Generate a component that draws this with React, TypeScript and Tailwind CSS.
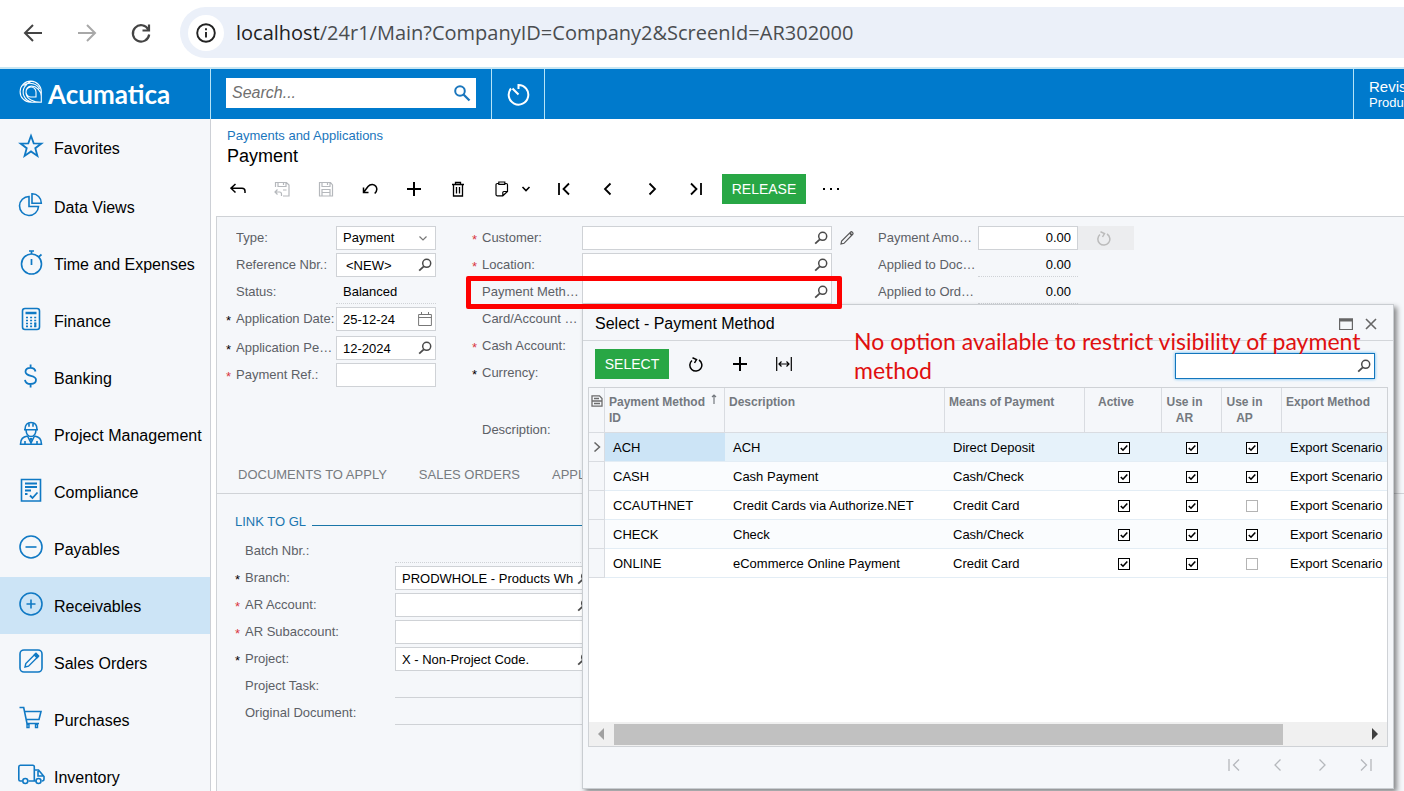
import type { ReactNode } from "react";
import clsx from "clsx";

type IconProps = { className?: string; children?: ReactNode; size?: number };

function Icon({ className, children, size = 24 }: IconProps) {
  return (
    <svg
      viewBox={`0 0 ${size} ${size}`}
      width={size}
      height={size}
      fill="none"
      stroke="currentColor"
      strokeWidth="1.6"
      aria-hidden="true"
      className={clsx("shrink-0", className)}
    >
      {children}
    </svg>
  );
}

const Lookup = () => (
  <Icon size={14} className="text-[#4a4a4a]">
    <circle cx="8.7" cy="5.3" r="4" strokeWidth="1.5" />
    <path d="M5.8 8.4 1.2 12.6" strokeWidth="1.8" />
  </Icon>
);

const Reload = ({ className }: { className?: string }) => (
  <Icon size={16} className={className}>
    <path d="M4 4.500A6 6 0 1 0 11 4M4.500 1.800l4 1.700-2 3.500" strokeWidth="1.500" />
  </Icon>
);

const Plus = () => (
  <Icon size={16}>
    <path d="M8 1v14M1 8h14" strokeWidth="2" />
  </Icon>
);

const modules = [
  {
    name: "Favorites",
    icon: <path d="m12 1.800 2.700 7.500 7.700.2-6.100 4.700 2.100 7.700L12 17.400l-6.400 4.500 2.100-7.700-6.100-4.700 7.700-.2z" strokeWidth="1.800" />,
  },
  {
    name: "Data Views",
    icon: (
      <>
        <path d="M10 3.500A9.500 9.500 0 1 0 19.500 13.500H10z" />
        <path d="M13 .8a9.200 9.200 0 0 1 9.300 9.400H13z" />
      </>
    ),
  },
  {
    name: "Time and Expenses",
    icon: (
      <>
        <circle cx="12.500" cy="14" r="10" />
        <path d="M12.500 9v6M10 1h5M12.500 1v3M19.500 7l3-2.500" strokeWidth="1.700" />
      </>
    ),
  },
  {
    name: "Finance",
    icon: (
      <>
        <rect x="3.500" y="1.500" width="17" height="21" rx="2.500" />
        <path d="M6.500 6h11" strokeWidth="2.500" />
        <path d="M7 10.500h10.500M7 13.500h10.500M7 16.500h10.500M7 19.300h10.500" strokeWidth="1.700" strokeDasharray="2 2.100" />
        <path d="M16.300 15.500v4.500" strokeWidth="2" />
      </>
    ),
  },
  {
    name: "Banking",
    icon: (
      <path
        d="M16.500 7.500C16 4.800 14 3.800 11.500 3.800 8.500 3.800 6.500 5.500 6.500 7.800c0 5.500 10.500 2.800 10.500 8 0 2.800-2.300 4.200-5.300 4.200-3.200 0-5.300-1.300-5.700-4.200M11.600.5v3.300M11.600 20v3.500"
        strokeWidth="1.800"
      />
    ),
  },
  {
    name: "Project Management",
    icon: (
      <>
        <path d="M6 8.500C6 4 8.500 1.500 12 1.500S18 4 18 8.500M5 8.700h14M10 1.800v4M14 1.800v4M7 9c.3 4 2 6.500 5 6.500s4.700-2.500 5-6.500" />
        <path d="M8.500 15C4 16 1.500 17.500 1.500 23.200h21c0-5.700-2.500-7.200-7-8.200M8.500 15l3.500 7 3.500-7M6 20v3M18 20v3" />
        <path d="m10.500 17 1.500 5 1.500-5z" fill="currentColor" stroke="none" />
      </>
    ),
  },
  {
    name: "Compliance",
    icon: (
      <>
        <path d="M2.500 1.500h19v21.500h-19z" />
        <path d="M6 5.500h12M6 9h12M6 12.500h6M6 16h2.500M11 17.500l2.500 2.500 5-5.500" strokeWidth="1.800" />
      </>
    ),
  },
  {
    name: "Payables",
    icon: (
      <>
        <circle cx="12" cy="12" r="11" />
        <path d="M6.500 12h11" />
      </>
    ),
  },
  {
    name: "Receivables",
    icon: (
      <>
        <circle cx="12" cy="12" r="11" />
        <path d="M7.500 12h9M12 7.500v9" />
      </>
    ),
    active: true,
  },
  {
    name: "Sales Orders",
    icon: (
      <>
        <rect x="1" y="1" width="22" height="22" rx="4" />
        <path d="m6 18 .8-3.500L16.500 4.800l2.700 2.700L9.500 17.200z" strokeWidth="1.400" />
        <path d="m15.500 6 1.500-1.500 2.500 2.500L18 8.500z" fill="currentColor" />
      </>
    ),
  },
  {
    name: "Purchases",
    icon: (
      <>
        <path d="M.5 1.500h4.200L8 17.500h12M5.500 5.500h16.500L20 13.500H7.200" />
        <path d="M8 18.500h2v3H8zM16.500 18.500h2v3h-2z" strokeWidth="1.400" />
      </>
    ),
  },
  {
    name: "Inventory",
    icon: (
      <>
        <path d="M3 18H1.300a1.500 1.500 0 0 1-1.500-1.500V4A1.700 1.700 0 0 1 1.300 2.300h12.500A1.500 1.500 0 0 1 15.300 4v14H9.500M15.300 7h4.200l5.500 6.500V16a2 2 0 0 1-2 2M15.300 18h1.500M19 8v5h5.500" />
        <circle cx="6.300" cy="18" r="2.500" />
        <circle cx="19.500" cy="18" r="2.500" />
      </>
    ),
  },
];

const methods = [
  { id: "ACH", description: "ACH", means: "Direct Deposit", ap: true },
  { id: "CASH", description: "Cash Payment", means: "Cash/Check", ap: true },
  { id: "CCAUTHNET", description: "Credit Cards via Authorize.NET", means: "Credit Card", ap: false },
  { id: "CHECK", description: "Check", means: "Cash/Check", ap: true },
  { id: "ONLINE", description: "eCommerce Online Payment", means: "Credit Card", ap: false },
];

type FieldProps = {
  id: string;
  label: string;
  required?: "red" | "black";
  labelWidth?: string;
  className?: string;
  children?: ReactNode;
};

function Field({ id, label, required, labelWidth = "w-[100px]", className, children }: FieldProps) {
  return (
    <div className={clsx("flex h-6 items-center", className)}>
      <span
        className={clsx("w-[10px] shrink-0 pt-[3px] text-[13px] leading-5", required === "red" ? "text-[#d9363e]" : "text-black")}
        aria-hidden="true"
      >
        {required ? "*" : ""}
      </span>
      <label htmlFor={id} className={clsx("shrink-0 truncate leading-6 text-[#5c6066]", labelWidth)}>
        {label}
      </label>
      {children}
    </div>
  );
}

type TextBoxProps = { id: string; value?: string; width: string; lookup?: boolean; indent?: string; icon?: ReactNode };

function TextBox({ id, value = "", width, lookup, indent = "pl-[6px]", icon }: TextBoxProps) {
  return (
    <div className={clsx("flex h-6 shrink-0 items-center border border-[#cfd2d6] bg-white pr-[3px]", width)}>
      <input id={id} defaultValue={value} className={clsx("h-full w-0 min-w-0 flex-1 bg-transparent text-black outline-none", indent)} />
      {lookup && (
        <button type="button" aria-label="Look up">
          <Lookup />
        </button>
      )}
      {icon}
    </div>
  );
}

function ToolButton({ label, muted, children }: { label: string; muted?: boolean; children: ReactNode }) {
  return (
    <button
      type="button"
      aria-label={label}
      className={clsx("flex h-8 w-11 shrink-0 items-center justify-center", muted ? "text-[#b5b8bc]" : "text-black")}
    >
      {children}
    </button>
  );
}

const pagerPaths = [
  { label: "First", d: "M3 2v12M13 2.500 7.500 8l5.500 5.500" },
  { label: "Previous", d: "M10.500 2.500 5 8l5.500 5.500" },
  { label: "Next", d: "M5.500 2.500 11 8l-5.500 5.500" },
  { label: "Last", d: "M13 2v12M3 2.500 8.500 8 3 13.500" },
];

function Pager({ muted }: { muted?: boolean }) {
  return (
    <>
      {pagerPaths.map((p) => (
        <ToolButton key={p.label} label={p.label} muted={muted}>
          <Icon size={16}>
            <path d={p.d} strokeWidth={muted ? 1.3 : 1.8} />
          </Icon>
        </ToolButton>
      ))}
    </>
  );
}

function Check({ checked, label }: { checked: boolean; label: string }) {
  return (
    <span className="mx-auto grid size-3">
      <input
        type="checkbox"
        defaultChecked={checked}
        aria-label={label}
        className="peer col-start-1 row-start-1 size-3 appearance-none border border-[#b4b4b4] bg-white checked:border-black"
      />
      <svg
        viewBox="0 0 12 12"
        fill="none"
        stroke="black"
        strokeWidth="1.6"
        className="pointer-events-none invisible col-start-1 row-start-1 size-3 peer-checked:visible"
      >
        <path d="M2.800 6 5 8.200 9.300 3.500" />
      </svg>
    </span>
  );
}

function BrowserBar() {
  return (
    <div className="flex h-[69px] shrink-0 items-center border-b-2 border-[#c8e6f3] bg-white pb-[2px] text-[#444]">
      <button type="button" aria-label="Back" className="ml-[21px]">
        <Icon>
          <path d="M21 12H4M12 4 4 12l8 8" strokeWidth="2" />
        </Icon>
      </button>
      <button type="button" aria-label="Forward" className="ml-[30px] text-[#a8a8a8]">
        <Icon>
          <path d="M3 12h17M12 4l8 8-8 8" strokeWidth="2" />
        </Icon>
      </button>
      <button type="button" aria-label="Reload" className="ml-[30px]">
        <Icon>
          <path d="M19.300 8.500A8.200 8.200 0 1 0 20.200 13.500M20 3.500V9.500h-6.500" strokeWidth="2.200" />
        </Icon>
      </button>
      <div className="ml-[27px] flex h-[51px] flex-1 items-center rounded-l-full bg-[#ebf0f9] pl-2">
        <span className="flex size-9 items-center justify-center rounded-full bg-white text-[#222]">
          <Icon size={20}>
            <circle cx="10" cy="10" r="8.800" strokeWidth="1.900" />
            <path d="M10 9v5.500M10 5.300v2" strokeWidth="1.900" />
          </Icon>
        </span>
        <div className="ml-3 font-['Open_Sans',sans-serif] text-xl leading-7 whitespace-nowrap text-[#4a4d50]">
          <span className="text-[#1f1f1f]">localhost</span>/24r1/Main?CompanyID=Company2&amp;ScreenId=AR302000
        </div>
      </div>
    </div>
  );
}

function AppHeader() {
  return (
    <header className="flex h-[50px] shrink-0 bg-[#007acc] text-white">
      <a href="#" className="flex w-[211px] shrink-0 items-center border-r border-[#b5e4f7] pl-[19px]">
        <Icon className="mb-1">
          <path
            d="M22.300 22.300H11.800A10.600 10.600 0 1 1 22.300 12z M22.300 22.300C14 22.300 8 19 7 13.500 6.300 9 9 6 12.500 6c5 0 9.500 5 9.800 10M12 1.500C7 3.500 2 9.500 5 16c1.500 3.500 5 5.500 8 6.300M17 17h-4.500a5 5 0 1 1 4.500-5zM4.500 5.500C10 1 19 4 20.500 9"
            strokeWidth="1.100"
          />
        </Icon>
        <span className="ml-[5px] font-[Lato,sans-serif] text-[26px] leading-7 font-bold">Acumatica</span>
      </a>
      <div className="flex w-[281px] shrink-0 items-start border-r border-[#b5e4f7] pt-[9px] pl-[15px]">
        <div className="flex h-[30px] w-[250px] items-center bg-white pr-[5px]">
          <input
            aria-label="Search"
            placeholder="Search..."
            className="w-0 flex-1 pl-[6px] text-base text-black italic outline-none placeholder:text-[#6f6f6f]"
          />
          <button type="button" aria-label="Search" className="text-[#1a76bd]">
            <Icon size={18}>
              <circle cx="7" cy="7" r="4.800" strokeWidth="2" />
              <path d="m10.500 10.500 6 6" strokeWidth="2.300" />
            </Icon>
          </button>
        </div>
      </div>
      <button type="button" aria-label="Business date" className="flex w-[53px] shrink-0 items-center justify-center border-r border-[#b5e4f7]">
        <Icon>
          <path d="M5 6.500A9.800 9.800 0 1 0 12.500 3V7M6.500 6.500 12.500 12.500" strokeWidth="2" />
        </Icon>
      </button>
      <div className="ml-auto w-[51px] shrink-0 overflow-hidden border-l border-[#b5e4f7] pt-[10px] pl-[15px] whitespace-nowrap">
        <div className="text-[15px] leading-4">Revision</div>
        <div className="text-[13px] leading-4">Products</div>
      </div>
    </header>
  );
}

function Sidebar() {
  return (
    <nav className="w-[211px] shrink-0 overflow-hidden border-r border-[#cdd0d6] bg-[#f5f7fa]">
      {modules.map((m) => (
        <a
          key={m.name}
          href="#"
          className={clsx(
            "flex h-[57px] items-center gap-[11px] pt-[2px] pl-[19px] text-base whitespace-nowrap text-black first:h-[59px] first:pb-[2px]",
            m.active && "bg-[#cce4f6]",
          )}
        >
          <Icon className="mb-[5px] overflow-visible text-[#1079c4]">{m.icon}</Icon>
          {m.name}
        </a>
      ))}
    </nav>
  );
}

function Toolbar() {
  return (
    <div className="mt-[6px] ml-[5px] flex items-center">
      <ToolButton label="Back">
        <Icon size={16}>
          <path d="M5.500 3 1 7.200l4.500 4.300M1 7.200h11a3 3 0 0 1 3 3V12" strokeWidth="1.500" />
        </Icon>
      </ToolButton>
      <ToolButton label="Save and close" muted>
        <Icon size={16}>
          <path d="M1.500 6V1.500h11L15 4v11H9M4 1.500v4h8v-4M9.500 2v2M9 9h3.500M3.500 8.500 1 11l2.500 2.500M1 11h4.500a2 2 0 0 1 2 2v2" strokeWidth="1.200" />
        </Icon>
      </ToolButton>
      <ToolButton label="Save" muted>
        <Icon size={16}>
          <path d="M1.500 1.500h11L14.500 4v11h-13zM4 1.500v4h8v-4M9.500 2v2M4 15V8.500h8V15M4 11.500h8" strokeWidth="1.200" />
        </Icon>
      </ToolButton>
      <ToolButton label="Undo">
        <Icon size={16}>
          <path d="M1.500 6.500v5h5M1.700 11.300 6 5.500c2.500-3 6.500-2.500 8 0 1.300 2.300.8 5-1.300 7" strokeWidth="1.500" />
        </Icon>
      </ToolButton>
      <ToolButton label="Add">
        <Plus />
      </ToolButton>
      <ToolButton label="Delete">
        <Icon size={16}>
          <path d="M2 3.500h12M5.500 3.500v-2h5v2M3.500 3.500v11.500h9V3.500M6.500 6v6.500M9.500 6v6.500" strokeWidth="1.300" />
        </Icon>
      </ToolButton>
      <button type="button" aria-label="Copy and paste" className="flex h-8 w-[62px] shrink-0 items-center gap-[11px] pl-[14px]">
        <Icon size={16}>
          <path d="M4.500 2.500H3.300A1.300 1.300 0 0 0 2 3.800V13.500a1.300 1.300 0 0 0 1.300 1.300h5.500L13.500 10.500V3.800A1.300 1.300 0 0 0 12.200 2.500H11M8.800 14.800V11.500a1 1 0 0 1 1-1h3.700M4.800 1h6v2.300h-6z" strokeWidth="1.200" />
        </Icon>
        <Icon size={10}>
          <path d="m1.500 3 3.500 3.500L8.500 3" />
        </Icon>
      </button>
      <Pager />
      <button type="button" className="ml-1 h-[30px] w-[84px] shrink-0 bg-[#28a745] text-sm text-white">
        RELEASE
      </button>
      <button type="button" aria-label="More" className="ml-[3px] flex h-8 w-11 shrink-0 items-center justify-center gap-[5px]">
        <span className="size-[2px] bg-black" />
        <span className="size-[2px] bg-black" />
        <span className="size-[2px] bg-black" />
      </button>
    </div>
  );
}

function Summary() {
  return (
    <div className="flex h-[240px] pt-[9px] pl-[9px]">
      <div className="flex w-[246px] shrink-0 flex-col gap-[3px]">
        <Field id="type" label="Type:">
          <div className="flex h-6 w-[100px] items-center border border-[#cfd2d6] bg-white pr-[7px]">
            <select id="type" className="h-full w-0 flex-1 appearance-none bg-transparent pl-[6px] text-black outline-none">
              <option>Payment</option>
            </select>
            <Icon size={10} className="pointer-events-none text-[#777]">
              <path d="m1.500 3.500 3.500 3.500 3.500-3.500" strokeWidth="1.200" />
            </Icon>
          </div>
        </Field>
        <Field id="reference" label="Reference Nbr.:">
          <TextBox id="reference" value="<NEW>" width="w-[100px]" indent="pl-[9px]" lookup />
        </Field>
        <Field id="status" label="Status:">
          <output id="status" className="h-6 w-[100px] border-b border-dotted border-[#cfd2d6] pl-[7px] leading-6 text-black">
            Balanced
          </output>
        </Field>
        <Field id="date" label="Application Date:" required="black">
          <TextBox
            id="date"
            value="25-12-24"
            width="w-[100px]"
            icon={
              <button type="button" aria-label="Open calendar">
                <Icon size={14} className="text-[#777]">
                  <path d="M.6 2.500h12.800v11H.6zM.6 5.500h12.800M3.500 0v2.500M10.500 0v2.500" strokeWidth="1" />
                </Icon>
              </button>
            }
          />
        </Field>
        <Field id="period" label="Application Period:" required="black" className="mt-[2px]">
          <TextBox id="period" value="12-2024" width="w-[100px]" lookup />
        </Field>
        <Field id="paymentRef" label="Payment Ref.:" required="red">
          <TextBox id="paymentRef" width="w-[100px]" />
        </Field>
      </div>
      <div className="flex w-[396px] shrink-0 flex-col gap-[3px]">
        <Field id="customer" label="Customer:" required="red">
          <TextBox id="customer" width="w-[250px]" lookup />
          <button type="button" aria-label="Edit customer" className="ml-2 text-[#555]">
            <Icon size={14}>
              <path d="m1 13 .6-3L10.300 1.300a1.400 1.400 0 0 1 2.200 2.200L4 12.300z" strokeWidth="1.200" />
              <path d="m9.800 2.200 2 2" strokeWidth="1.800" />
            </Icon>
          </button>
        </Field>
        <Field id="location" label="Location:" required="red">
          <TextBox id="location" width="w-[250px]" lookup />
        </Field>
        <div className="relative w-[360px]">
          <Field id="method" label="Payment Method:">
            <TextBox id="method" width="w-[250px]" lookup />
          </Field>
          <div className="pointer-events-none absolute -top-1 -right-[10px] -bottom-[5px] -left-[6px] z-20 rounded-xs border-[5px] border-[#fe0000]" />
        </div>
        <Field id="card" label="Card/Account Nbr.:">
          <TextBox id="card" width="w-[250px]" lookup />
        </Field>
        <Field id="cash" label="Cash Account:" required="red">
          <TextBox id="cash" width="w-[250px]" lookup />
        </Field>
        <Field id="currency" label="Currency:" required="black">
          <TextBox id="currency" width="w-[250px]" lookup />
        </Field>
        <Field id="description" label="Description:" className="mt-[30px]">
          <TextBox id="description" width="w-[250px]" />
        </Field>
      </div>
      <div className="flex shrink-0 flex-col gap-[3px]">
        <Field id="amount" label="Payment Amount:">
          <div className="flex h-6 w-[100px] items-center border border-[#cfd2d6] bg-white pr-[6px]">
            <input id="amount" defaultValue="0.00" className="w-0 flex-1 text-right text-black outline-none" />
          </div>
          <button type="button" aria-label="Recalculate" className="flex h-6 w-14 items-center justify-center bg-[#ecedef] pr-1 text-[#bbb]">
            <Reload />
          </button>
        </Field>
        <Field id="appliedDocs" label="Applied to Documents:">
          <output id="appliedDocs" className="h-6 w-[100px] border-b border-dotted border-[#cfd2d6] pr-[7px] text-right leading-6 text-black">
            0.00
          </output>
        </Field>
        <Field id="appliedOrders" label="Applied to Orders:">
          <output id="appliedOrders" className="h-6 w-[100px] border-b border-dotted border-[#cfd2d6] pr-[7px] text-right leading-6 text-black">
            0.00
          </output>
        </Field>
      </div>
    </div>
  );
}

function FinancialTab() {
  const label = "w-[150px]";
  return (
    <div className="pt-[18px] pl-[18px]">
      <div className="flex h-5 items-center gap-[6px]">
        <h2 className="text-[#1a76b0]">LINK TO GL</h2>
        <div className="mt-[6px] h-px w-[360px] bg-[#1a76a8]" />
      </div>
      <div className="mt-[7px] flex flex-col gap-[3px]">
        <Field id="batch" label="Batch Nbr.:" labelWidth={label}>
          <output id="batch" className="h-6 w-[200px] border-b border-dotted border-[#cfd2d6]" />
        </Field>
        <Field id="branch" label="Branch:" required="black" labelWidth={label}>
          <TextBox id="branch" value="PRODWHOLE - Products Wh" width="w-[200px]" lookup />
        </Field>
        <Field id="arAccount" label="AR Account:" required="red" labelWidth={label}>
          <TextBox id="arAccount" width="w-[200px]" lookup />
        </Field>
        <Field id="arSub" label="AR Subaccount:" required="red" labelWidth={label}>
          <TextBox id="arSub" width="w-[300px]" lookup />
        </Field>
        <Field id="project" label="Project:" required="black" labelWidth={label}>
          <TextBox id="project" value="X - Non-Project Code." width="w-[200px]" lookup />
        </Field>
        <Field id="task" label="Project Task:" labelWidth={label}>
          <output id="task" className="h-6 w-[200px] border-b border-[#cfd2d6]" />
        </Field>
        <Field id="original" label="Original Document:" labelWidth={label}>
          <output id="original" className="h-6 w-[200px] border-b border-[#cfd2d6]" />
        </Field>
      </div>
    </div>
  );
}

function MethodTable() {
  const head = "border-r border-b border-[#d9dce1] px-1 pt-[6px] align-top font-bold";
  const cell = "h-[29px] border-b border-[#e3edf5] pt-px";
  return (
    <table className="w-full table-fixed border-separate border-spacing-0 text-left">
      <colgroup>
        <col className="w-4" />
        <col className="w-[120px]" />
        <col className="w-[220px]" />
        <col className="w-[140px]" />
        <col className="w-[77px]" />
        <col className="w-[60px]" />
        <col className="w-[60px]" />
        <col />
      </colgroup>
      <thead className="text-xs leading-4 text-[#74797f]">
        <tr className="h-[45px] bg-[#f5f7fa]">
          <th className="border-r border-b border-[#d9dce1] pt-[7px] pl-[2px] align-top">
            <Icon size={12} className="text-[#6c6c6c]">
              <path d="M1 .8h7.500L11 3.500v7.700H1zM1 6h10M3 3.500h5M3 8.500h6" strokeWidth="1.300" />
            </Icon>
          </th>
          <th className={head}>
            <div className="flex justify-between">
              <span>Payment Method ID</span>
              <Icon size={10} className="mr-px">
                <path d="M5 10V1M3 3l2-2 2 2" strokeWidth="1.200" />
              </Icon>
            </div>
          </th>
          <th className={head}>Description</th>
          <th className={head}>Means of Payment</th>
          <th className={clsx(head, "pr-[18px] text-center")}>Active</th>
          <th className={clsx(head, "pr-[18px] text-center")}>Use in AR</th>
          <th className={clsx(head, "pr-[18px] text-center")}>Use in AP</th>
          <th className="border-b border-[#d9dce1] px-1 pt-[6px] align-top font-bold whitespace-nowrap">Export Method</th>
        </tr>
      </thead>
      <tbody className="whitespace-nowrap text-black">
        {methods.map((m, i) => (
          <tr key={m.id} className={i === 0 ? "bg-[#e6f2fa]" : i % 2 ? "bg-[#fafcfe]" : "bg-white"}>
            <td className="border-r border-b border-[#d9dce1] bg-[#f5f7fa] pl-[3px]">
              {i === 0 && (
                <Icon size={10} className="text-[#666]">
                  <path d="m2.500.5 5 4.500-5 4.500" strokeWidth="1.500" />
                </Icon>
              )}
            </td>
            <td className={clsx(cell, "pl-2", i === 0 && "bg-[#cce4f6]")}>{m.id}</td>
            <td className={clsx(cell, "pl-2")}>{m.description}</td>
            <td className={clsx(cell, "pl-2")}>{m.means}</td>
            <td className={cell}>
              <Check checked label={`${m.id} active`} />
            </td>
            <td className={cell}>
              <Check checked label={`${m.id} use in AR`} />
            </td>
            <td className={cell}>
              <Check checked={m.ap} label={`${m.id} use in AP`} />
            </td>
            <td className={clsx(cell, "pl-2")}>Export Scenario</td>
          </tr>
        ))}
      </tbody>
    </table>
  );
}

function MethodDialog() {
  return (
    <div
      role="dialog"
      aria-label="Select - Payment Method"
      className="absolute top-[185px] right-[10px] bottom-[2px] left-[371px] z-10 flex flex-col border border-[#c9cdd1] bg-[#f5f7fa] shadow-[3px_3px_5px_rgba(0,0,0,0.45)]"
    >
      <div className="flex h-9 shrink-0 items-center border-b border-[#d3d6da] pt-[2px] pr-4 pl-3">
        <h2 className="mr-auto text-base text-black">Select - Payment Method</h2>
        <button type="button" aria-label="Maximize" className="mr-3 text-[#666]">
          <Icon size={14}>
            <path d="M.6 2h12.800v10.500H.6z" strokeWidth="1.200" />
            <path d="M0 3h14" strokeWidth="3" />
          </Icon>
        </button>
        <button type="button" aria-label="Close" className="text-[#666]">
          <Icon size={12}>
            <path d="m1 1 10 10M11 1 1 11" />
          </Icon>
        </button>
      </div>
      <div className="flex h-[46px] shrink-0 items-center pr-[18px] pl-3 text-black">
        <button type="button" className="mr-[5px] h-[30px] w-[74px] bg-[#28a745] text-sm text-white">
          SELECT
        </button>
        <ToolButton label="Refresh">
          <Reload />
        </ToolButton>
        <ToolButton label="Add">
          <Plus />
        </ToolButton>
        <ToolButton label="Fit columns">
          <Icon size={16}>
            <path d="M.7 1v14M15.300 1v14M3 8h10M5.500 5.500 3 8l2.500 2.500M10.500 5.500 13 8l-2.500 2.500" strokeWidth="1.200" />
          </Icon>
        </ToolButton>
        <div className="mt-1 ml-auto flex h-[26px] w-[200px] items-center border border-[#1376bd] bg-white pr-[3px] shadow-[0_0_3px_#56b4f0]">
          <input aria-label="Find" className="h-full w-0 flex-1 pl-[6px] outline-none" />
          <button type="button" aria-label="Find">
            <Lookup />
          </button>
        </div>
      </div>
      <div className="mr-[5px] ml-[5px] flex flex-1 flex-col border border-[#cfd2d6] bg-white">
        <MethodTable />
        <div className="mt-auto flex h-[24px] items-center bg-[#f0f0f0] px-[6px]">
          <Icon size={12} className="text-[#a0a0a0]">
            <path d="M9 0v12L3 6z" fill="currentColor" stroke="none" />
          </Icon>
          <div className="mr-[86px] ml-[7px] h-[21px] flex-1 bg-[#c1c1c1]" />
          <Icon size={12} className="text-[#404040]">
            <path d="M3 0v12l6-6z" fill="currentColor" stroke="none" />
          </Icon>
        </div>
      </div>
      <div className="flex h-[41px] shrink-0 items-center justify-end pr-[5px] pb-[6px]">
        <Pager muted />
      </div>
      <p className="pointer-events-none absolute top-[22px] left-[271px] w-[520px] font-[Lato,sans-serif] text-[23px] leading-[29px] text-[#e00f0f]">
        No option available to restrict visibility of payment method
      </p>
    </div>
  );
}

export default function App() {
  return (
    <div className="flex h-screen flex-col overflow-hidden bg-white font-['Liberation_Sans',Arial,sans-serif] text-[13px]">
      <BrowserBar />
      <AppHeader />
      <div className="flex min-h-0 flex-1">
        <Sidebar />
        <main className="relative flex min-w-0 flex-1 flex-col">
          <div className="pt-2 pl-4">
            <a href="#" className="block leading-[18px] text-[#1a76bd]">
              Payments and Applications
            </a>
            <h1 className="text-lg leading-[22px] text-black">Payment</h1>
          </div>
          <Toolbar />
          <div className="mt-[11px] ml-[5px] min-h-0 flex-1 overflow-hidden border-t border-l border-[#cfd2d6] bg-[#f5f7fa]">
            <Summary />
            <div className="border-b border-[#d0d3d7]">
              <div className="flex h-9 w-[366px] items-center gap-8 overflow-hidden pl-[21px] whitespace-nowrap text-[#777b80]">
                <button type="button">DOCUMENTS TO APPLY</button>
                <button type="button">SALES ORDERS</button>
                <button type="button">APPLICATION HISTORY</button>
              </div>
            </div>
            <FinancialTab />
          </div>
          <MethodDialog />
        </main>
      </div>
    </div>
  );
}
